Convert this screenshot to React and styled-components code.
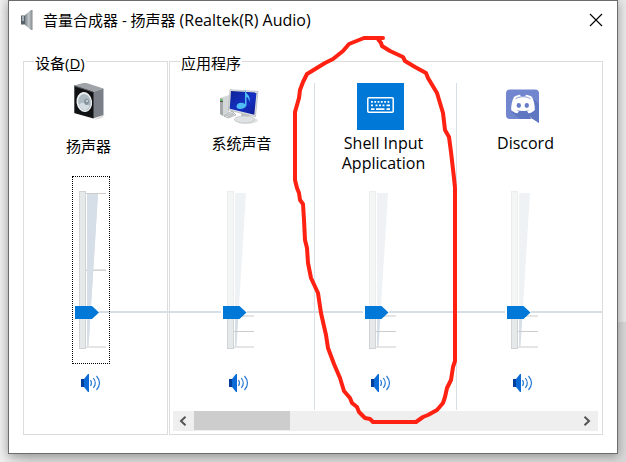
import React, { useState } from "react";
import styled, { createGlobalStyle, css } from "styled-components";

const GlobalStyle = createGlobalStyle`
  *, *::before, *::after { box-sizing: border-box; }
  body {
    margin: 0;
    background:
      linear-gradient(#e9e9e9 322px, #d8d8d8 322px) right / 16px 100% no-repeat,
      linear-gradient(90deg, #f0f0f0, #dadada 30px);
    background-color: #dadada;
    color: #000;
    font: 15px/20px "Open Sans", "Noto Sans CJK SC", sans-serif;
  }
  button { font: inherit; }
`;

const Desktop = styled.main`
  padding: 0 8px 8px;
  overflow: hidden;
`;

const Window = styled.section`
  background: #fff;
  border: 1px solid #6c6c6c;
  box-shadow: 0 2px 10px rgba(0, 0, 0, 0.35);
`;

const TitleBar = styled.header`
  display: flex;
  align-items: center;
  height: 38px;
  padding: 0 14px 0 12px;
  gap: 10px;
`;

const Title = styled.h1`
  flex: 1;
  margin: 0;
  font-size: 15px;
  font-weight: 400;
  line-height: 20px;
  white-space: nowrap;
`;

const Latin = styled.span`
  font-size: 16px;
`;

const PlainButton = styled.button`
  display: flex;
  align-items: center;
  justify-content: center;
  padding: 0;
  border: 0;
  background: none;
`;

const CloseButton = styled(PlainButton)`
  width: 14px;
  height: 14px;
`;

const Mixer = styled.div`
  position: relative;
  display: grid;
  grid-template-columns: 145px minmax(0, 1fr);
  gap: 1px;
  padding: 10px 14px 18px;
`;

const Group = styled.fieldset`
  min-width: 0;
  margin: 0;
  padding: ${(p) => (p.$device ? "10px 14px 3px 0" : "10px 3px 3px")};
  border: 1px solid #dcdcdc;
`;

const Legend = styled.legend`
  margin-left: ${(p) => (p.$device ? "10px" : "7px")};
  padding: 4px 1px 0;
`;

const LevelLine = styled.div`
  position: absolute;
  top: 272px;
  left: 80px;
  right: 15px;
  height: 2px;
  background: #d6dfe7;
`;

const Channels = styled.div`
  display: grid;
  grid-template-columns: repeat(3, minmax(0, 1fr));
  margin-bottom: 1px;
`;

const Channel = styled.div`
  position: relative;
  display: flex;
  flex-direction: column;
  align-items: center;
  padding-bottom: 17px;
  ${(p) =>
    p.$app &&
    css`
      padding-right: 10px;
      border-right: 1px solid #d6dfe7;
      &:last-child { border-right-color: transparent; }
    `}
`;

const IconSlot = styled.div`
  display: flex;
  align-items: center;
  justify-content: center;
  height: 47px;
`;

const ChannelLabel = styled.label`
  height: 46px;
  padding: ${(p) => (p.$device ? "6px 0 0" : "3px 0 0 6px")};
  text-align: center;
`;

const Lower = styled.div`
  display: flex;
  flex-direction: column;
  align-items: center;
  gap: 9px;
  padding-left: ${(p) => (p.$device ? "5px" : "0")};
`;

const SliderBox = styled.div`
  position: relative;
  z-index: 1;
  display: grid;
  place-items: center start;
  width: 38px;
  height: 188px;
  ${(p) =>
    p.$focused &&
    css`
      outline: 1px dotted #000;
      outline-offset: -1px;
    `}
  & > * { grid-area: 1 / 1; }
`;

const thumb = css`
  appearance: none;
  width: 24px;
  height: 13px;
  border: 0;
  border-radius: 0;
  background: #0078d7;
  clip-path: polygon(0 0, 17px 0, 100% 50%, 17px 100%, 0 100%);
`;

const Range = styled.input`
  appearance: none;
  writing-mode: vertical-lr;
  direction: rtl;
  width: 24px;
  height: 170px;
  margin: 0 0 0 3px;
  background: transparent;
  outline: none;
  &::-webkit-slider-runnable-track { background: transparent; width: 24px; }
  &::-webkit-slider-thumb { ${thumb} }
  &::-moz-range-thumb { ${thumb} }
`;

const MuteButton = styled(PlainButton)`
  width: 20px;
  height: 20px;
`;

const ScrollBar = styled.div`
  display: flex;
  height: 20px;
  margin-right: 1px;
  background: #efefef;
`;

const ScrollButton = styled(PlainButton)`
  width: 21px;
  padding-right: 2px;
`;

const ScrollTrack = styled.div`
  flex: 1;
  &::before {
    content: "";
    display: block;
    width: 25%;
    height: 19px;
    background: #cdcdcd;
  }
`;

const Marker = styled.svg`
  position: absolute;
  z-index: 2;
  top: -49px;
  left: -25px;
  pointer-events: none;
`;

function SmallSpeaker() {
  return (
    <svg width="12" height="20" viewBox="0 0 12 20" aria-hidden="true">
      <defs>
        <linearGradient id="cone" x1="0" x2="1">
          <stop offset="0" stopColor="#7d868c" />
          <stop offset=".5" stopColor="#c3c9cc" />
          <stop offset="1" stopColor="#7e858a" />
        </linearGradient>
      </defs>
      <path d="M0 5.5h4v9H0z" fill="#596169" />
      <path d="M1 6h2v5H1z" fill="#a4adb3" />
      <path d="M4 5 10 0h1.5v20H10L4 15z" fill="url(#cone)" />
      <path d="M10.5 0v20" stroke="#929a9e" />
    </svg>
  );
}

function DeviceIcon() {
  return (
    <svg width="32" height="47" viewBox="0 0 32 47" aria-hidden="true">
      <path d="m24 35 8-4-3 4-8 2z" fill="#dcdcdc" />
      <path d="M1 2.500 12-.5l18.500 6L20 9z" fill="#a0a4a9" />
      <path d="M20 9 30.500 5.500v26.500L20 35.500z" fill="#7b8088" />
      <path d="M1 2.500 20.500 9v26.500L1 30z" fill="#101214" />
      <path d="M1.500 30V3L20 9" fill="none" stroke="#55585c" />
      <ellipse cx="11.300" cy="19" rx="7.800" ry="10" fill="#eceff0" transform="rotate(-8 11.300 19)" />
      <ellipse cx="11.500" cy="19.200" rx="6.300" ry="8.300" fill="#aebac1" transform="rotate(-8 11.500 19.200)" />
      <path d="M6 22c2-3 6-3 10.500 1-2.500 6-8 5.500-10.500-1z" fill="#d4dde2" />
      <ellipse cx="13.500" cy="18.800" rx="2.400" ry="3.100" fill="#84919a" />
      <circle cx="14" cy="18" r="1" fill="#dae4e8" />
    </svg>
  );
}

function ComputerIcon() {
  return (
    <svg width="40" height="36" viewBox="0 0 40 36" aria-hidden="true">
      <defs>
        <linearGradient id="screen" x1="0" y1="0" x2="1" y2="1">
          <stop offset="0" stopColor="#0c2395" />
          <stop offset=".55" stopColor="#1630c4" />
          <stop offset="1" stopColor="#0b1c91" />
        </linearGradient>
      </defs>
      <ellipse cx="28" cy="31.500" rx="11" ry="3.500" fill="#e5e5e5" />
      <path d="m1 9 9-3v19L6 28l-5-3z" fill="#d4d7d8" />
      <path d="m1 9 3 1v17l-3-2z" fill="#a4a8a9" />
      <path d="M1 12.500h3" stroke="#4e5354" />
      <circle cx="2.500" cy="11" r="1" fill="#45c746" />
      <path d="m5 27 8-5 4 4-8 3z" fill="#e4e7e8" stroke="#9da1a3" strokeWidth=".7" />
      <path d="m7 27 7-3M9 28l6-3" stroke="#979c9f" strokeWidth=".7" />
      <path d="m22 24 8 2 1 6h-8z" fill="#bfc3c4" />
      <ellipse cx="25.500" cy="30.500" rx="10" ry="3.600" fill="#dfe2e2" stroke="#b3b7b8" strokeWidth=".6" />
      <path d="m11 .7 28 1.700-2.500 25.300L9.500 21z" fill="#dce0e1" stroke="#a9adaf" strokeWidth=".6" />
      <path d="m12 2 25.500 1.600-2.200 22.200L10.700 19.800z" fill="url(#screen)" />
      <path d="M26 15V.5c1 5.500 6 5 4.500 12.500-.8-3.500-2-5-3-5V16c-1 4.500-10 5.500-10 1.500 0-3.500 5-5 8.500-2.500z" fill="#4fbdf2" />
    </svg>
  );
}

function KeyboardIcon() {
  return (
    <svg width="47" height="47" viewBox="0 0 47 47" aria-hidden="true">
      <path d="M0 0h47v47H0z" fill="#0078d7" />
      <rect x="10.800" y="14.800" width="25.400" height="14.400" rx="1" fill="none" stroke="#fff" strokeWidth="1.500" />
      <g stroke="#fff" strokeWidth="1.700">
        <path d="M14 18.800h19" strokeDasharray="1.800 1.500" />
        <path d="M14 22.400h3M18.500 22.400h10" strokeDasharray="2 1.500" />
        <path d="M29.500 22.400H33M14 26.200h3.500M19 26.200h8.500M29.500 26.200H33" />
      </g>
    </svg>
  );
}

function DiscordIcon() {
  return (
    <svg width="34" height="35" viewBox="0 0 34 35" aria-hidden="true">
      <path d="M4 .5h25q4 0 4 4V34l-6-4H4q-4 0-4-4V4.500q0-4 4-4z" fill="#7186cf" />
      <path d="m28 10 5 5v19l-6-4H14L5 23z" fill="#5f76c1" />
      <path d="m24.500 27 2.500 5.500-2-1.500z" fill="#fff" opacity=".85" />
      <path d="M8 8c2-1.400 4-2 6-2.200l.8 1.400h4.400l.8-1.400c2 .2 4 .8 6 2.200 2 4 3 8.500 2.800 13-1.800 2-4 3-6.300 3.200l-1.500-2.200c1-.3 2-.8 3-1.500-4.500 2-9.500 2-14 0 1 .7 2 1.200 3 1.500l-1.500 2.200C9.200 24 7 23 5.200 21 5 16.500 6 12 8 8z" fill="#fff" />
      <path d="M9.500 9.800c4-2.800 11-2.800 15 0" fill="none" stroke="#7186cf" strokeWidth=".8" />
      <ellipse cx="12.800" cy="16.500" rx="2.200" ry="2.400" fill="#667cc6" />
      <ellipse cx="20.800" cy="16.500" rx="2.200" ry="2.400" fill="#667cc6" />
    </svg>
  );
}

function VolumeIcon() {
  return (
    <svg width="20" height="20" viewBox="0 0 20 20" aria-hidden="true">
      <path d="M3 6 7 1h1v18H7l-4-5z" fill="#0a6bd6" />
      <path d="M0 6h3v8H0z" fill="#00409c" />
      <g fill="none" stroke="#2b7bd2" strokeWidth="1.200">
        <path d="M9.500 7q2 3 0 6" />
        <path d="M12.300 5q4 5 0 10" />
        <path d="M15.500 3q6 7 0 14" />
      </g>
    </svg>
  );
}

function Scale({ device }) {
  return (
    <svg width="38" height="188" viewBox="0 0 38 188" aria-hidden="true">
      <rect x="7.500" y="15.500" width="6" height="157" fill="#e5e9e9" stroke="#d1d4d4" />
      <path d="M15 17h11L16.500 171H15z" fill="#d6dfe7" />
      {!device && <path d="M6 14h22v117H6z" fill="#fff" opacity=".58" />}
      <path d="M14 170h20v2H14z" fill="#e5e5e5" />
      {device ? (
        <>
          <path d="M14 17h20v1H14z" fill="#ccc" />
          <path d="M14 93h20v1H14z" fill="#e5e5e5" />
          <path d="M14 94h20v1H14z" fill="#d2d2d2" />
          <path d="M15 18h11L16.500 170H15z" fill="#d6dfe7" />
        </>
      ) : (
        <>
          <path d="M20 139h14v2H20z" fill="#e5e5e5" />
          <path d="M14 155h20v1H14z" fill="#ccc" />
          <path d="M1 134h2v5H1z" fill="#fff" />
        </>
      )}
      <path d="M20 134h7v5h-7z" fill="#fff" />
    </svg>
  );
}

const outline =
  "M383 38H364L349 44 343 51 333 59 325 63 307 74 303 82 300 90 299 98 295 112V180L297 188 299 193 300 200 303 204 304 220 305 240 307 248 308 263 311 278 318 293 321 313 326 335 328 348 334 364 340 378 344 391 350 398 352 403 357 407 359 412 365 418 370 419 373 422H416L423 417 428 415 437 410 443 403 445 397 447 388 451 380 453 367 455 361V188L454 178 451 152 449 137 445 130 443 113 437 93 428 78 426 73 415 67 405 61 403 57 390 51 382 46 381 43 378 39";

function VolumeChannel({ id, name, icon, device, marked }) {
  const [value, setValue] = useState(23);
  return (
    <Channel $app={!device}>
      <IconSlot>{icon}</IconSlot>
      <ChannelLabel htmlFor={id} $device={device}>
        {name}
      </ChannelLabel>
      <Lower $device={device}>
        <SliderBox $focused={device}>
          <Scale device={device} />
          <Range
            id={id}
            type="range"
            min="0"
            max="100"
            value={value}
            onChange={(e) => setValue(Number(e.target.value))}
          />
        </SliderBox>
        <MuteButton type="button" aria-label="静音">
          <VolumeIcon />
        </MuteButton>
      </Lower>
      {marked && (
        <Marker width="170" height="392" viewBox="290 34 170 392" aria-hidden="true">
          <path d={outline} fill="none" stroke="#ff2111" strokeWidth="4" strokeLinejoin="round" strokeLinecap="round" />
        </Marker>
      )}
    </Channel>
  );
}

function Chevron({ flip }) {
  return (
    <svg width="8" height="10" viewBox="0 0 8 10" aria-hidden="true">
      <path d={flip ? "m1.500 .8 4.500 4.200-4.500 4.200" : "M6.500.8 2 5l4.500 4.200"} fill="none" stroke="#555" strokeWidth="2" />
    </svg>
  );
}

export default function App() {
  return (
    <Desktop>
      <GlobalStyle />
      <Window>
        <TitleBar>
          <SmallSpeaker />
          <Title>
            音量合成器 - 扬声器 <Latin>(Realtek(R) Audio)</Latin>
          </Title>
          <CloseButton type="button" aria-label="关闭">
            <svg width="14" height="14" viewBox="0 0 14 14" aria-hidden="true">
              <path d="m1 1 12 12M13 1 1 13" stroke="#000" strokeWidth="1.100" />
            </svg>
          </CloseButton>
        </TitleBar>
        <Mixer>
          <LevelLine />
          <Group $device>
            <Legend $device>
              设备(<u>D</u>)
            </Legend>
            <VolumeChannel id="device" name="扬声器" icon={<DeviceIcon />} device />
          </Group>
          <Group>
            <Legend>应用程序</Legend>
            <Channels>
              <VolumeChannel id="system" name="系统声音" icon={<ComputerIcon />} />
              <VolumeChannel
                id="shell"
                name={
                  <Latin>
                    Shell Input
                    <br />
                    Application
                  </Latin>
                }
                icon={<KeyboardIcon />}
                marked
              />
              <VolumeChannel id="discord" name={<Latin>Discord</Latin>} icon={<DiscordIcon />} />
            </Channels>
            <ScrollBar>
              <ScrollButton type="button" aria-label="向左滚动">
                <Chevron />
              </ScrollButton>
              <ScrollTrack />
              <ScrollButton type="button" aria-label="向右滚动">
                <Chevron flip />
              </ScrollButton>
            </ScrollBar>
          </Group>
        </Mixer>
      </Window>
    </Desktop>
  );
}
